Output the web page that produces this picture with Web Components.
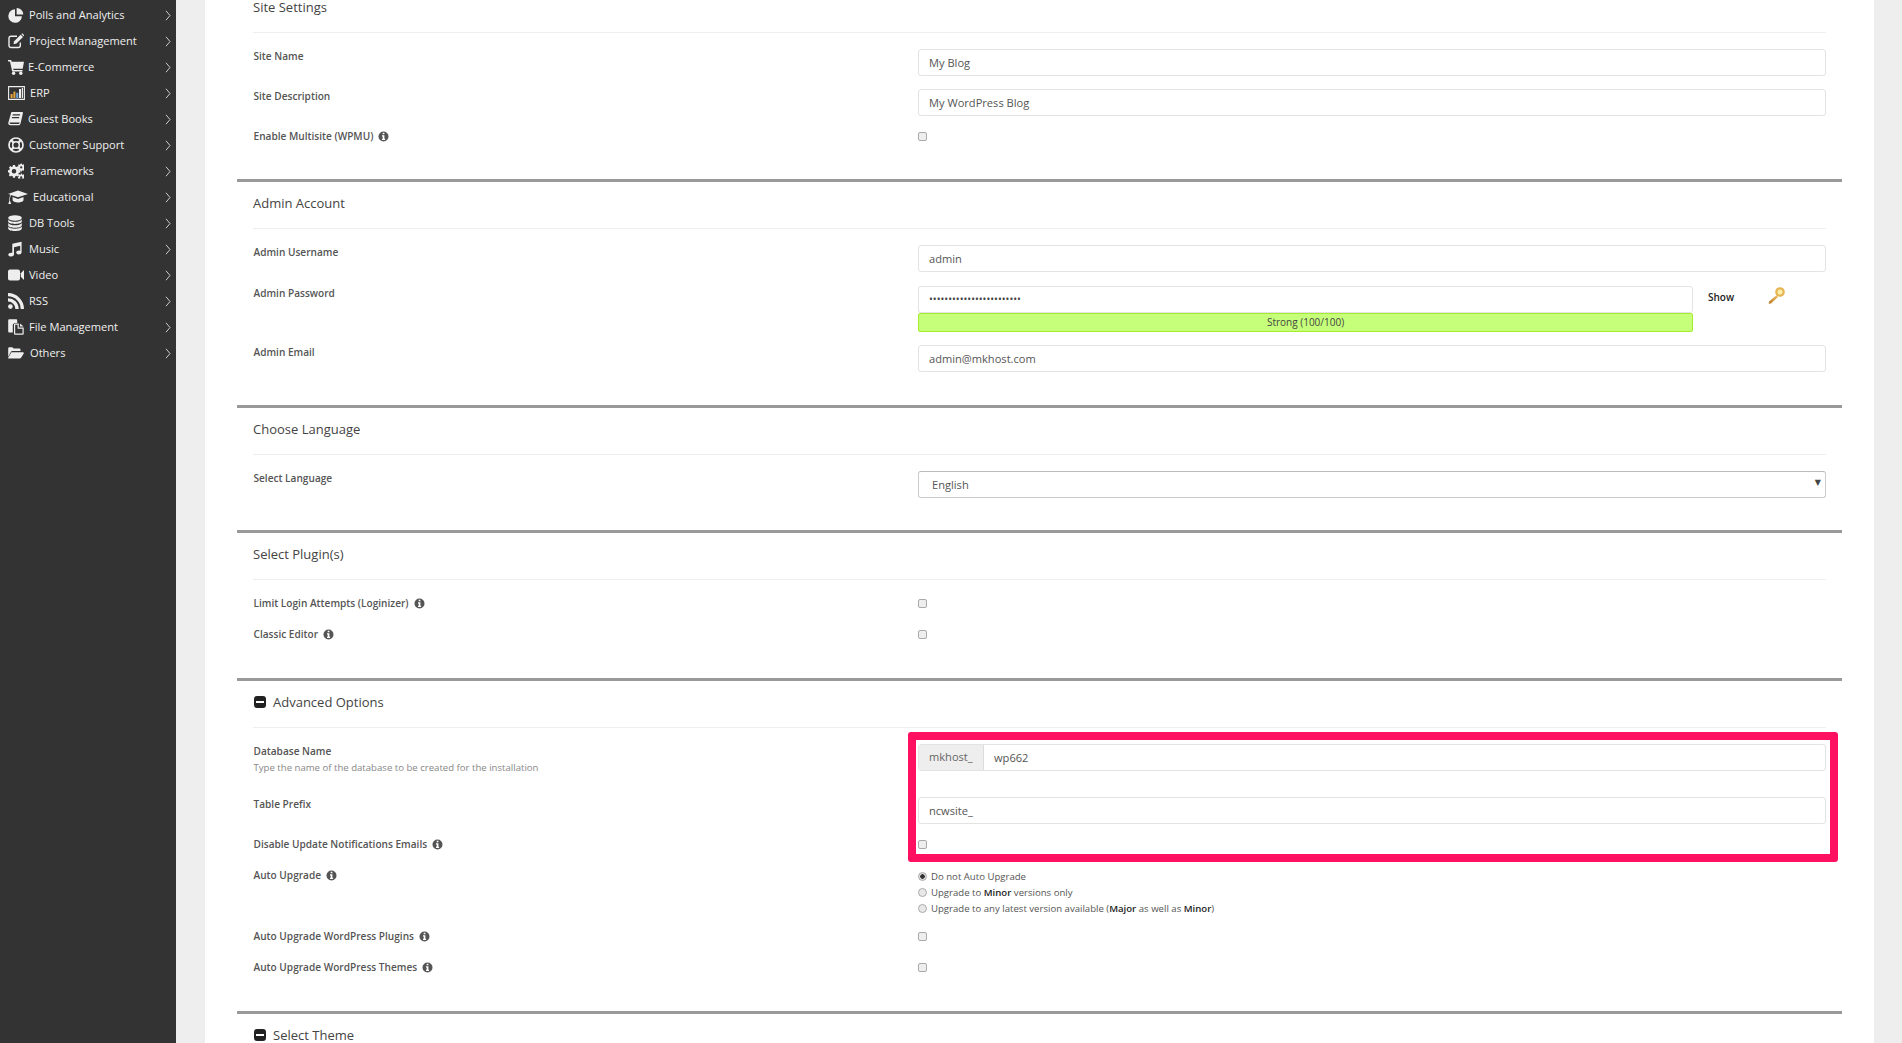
<!DOCTYPE html>
<html><head><meta charset="utf-8"><title>Install</title>
<style>
html,body{margin:0;padding:0;height:100%;overflow:hidden;background:#eee;font-family:"Open Sans","Noto Sans",sans-serif}
</style></head><body>
<rc-app>
  <rc-sidebar slot="side">
    <rc-nav icon="pie" at="29">Polls and Analytics</rc-nav>
    <rc-nav icon="edit" at="29">Project Management</rc-nav>
    <rc-nav icon="cart" at="28">E-Commerce</rc-nav>
    <rc-nav icon="bars" at="30">ERP</rc-nav>
    <rc-nav icon="book" at="28">Guest Books</rc-nav>
    <rc-nav icon="life" at="29">Customer Support</rc-nav>
    <rc-nav icon="cogs" at="30">Frameworks</rc-nav>
    <rc-nav icon="grad" at="33">Educational</rc-nav>
    <rc-nav icon="db" at="29">DB Tools</rc-nav>
    <rc-nav icon="music" at="29">Music</rc-nav>
    <rc-nav icon="video" at="29">Video</rc-nav>
    <rc-nav icon="rss" at="29">RSS</rc-nav>
    <rc-nav icon="files" at="29">File Management</rc-nav>
    <rc-nav icon="folder" at="30">Others</rc-nav>
  </rc-sidebar>

  <rc-section heading="Site Settings" pad="19" style="margin-top:-14px">
    <rc-field label="Site Name"><rc-input>My Blog</rc-input></rc-field>
    <rc-field label="Site Description"><rc-input>My WordPress Blog</rc-input></rc-field>
    <rc-field label="Enable Multisite (WPMU)" info check><rc-box></rc-box></rc-field>
  </rc-section>

  <rc-section heading="Admin Account" pad="20">
    <rc-field label="Admin Username"><rc-input>admin</rc-input></rc-field>
    <rc-field label="Admin Password" style="margin-top:14px"><rc-password></rc-password></rc-field>
    <rc-field label="Admin Email"><rc-input>admin@mkhost.com</rc-input></rc-field>
  </rc-section>

  <rc-section heading="Choose Language" pad="19">
    <rc-field label="Select Language"><rc-select>English</rc-select></rc-field>
  </rc-section>

  <rc-section heading="Select Plugin(s)" pad="20">
    <rc-field label="Limit Login Attempts (Loginizer)" info check><rc-box></rc-box></rc-field>
    <rc-field label="Classic Editor" info check><rc-box></rc-box></rc-field>
  </rc-section>

  <rc-section heading="Advanced Options" pad="20" toggle>
    <rc-highlight></rc-highlight>
    <rc-field label="Database Name" desc="Type the name of the database to be created for the installation" style="min-height:40px"><rc-input addon="mkhost_">wp662</rc-input></rc-field>
    <rc-field label="Table Prefix"><rc-input>ncwsite_</rc-input></rc-field>
    <rc-field label="Disable Update Notifications Emails" info check><rc-box></rc-box></rc-field>
    <rc-field label="Auto Upgrade" info check style="height:45px">
      <rc-radio checked>Do not Auto Upgrade</rc-radio>
      <rc-radio>Upgrade to <b>Minor</b> versions only</rc-radio>
      <rc-radio>Upgrade to any latest version available (<b>Major</b> as well as <b>Minor</b>)</rc-radio>
    </rc-field>
    <rc-field label="Auto Upgrade WordPress Plugins" info check><rc-box></rc-box></rc-field>
    <rc-field label="Auto Upgrade WordPress Themes" info check><rc-box></rc-box></rc-field>
  </rc-section>

  <rc-section heading="Select Theme" pad="20" toggle></rc-section>
</rc-app>

<script>
const ICONS={
pie:{w:16,s:`<path d="M7 2.2a6.8 6.8 0 1 0 6.9 7H7z"/><path d="M8.6 .9v6.6h6.7A6.8 6.8 0 0 0 8.6 .9z"/>`},
edit:{w:16,s:`<path fill="none" stroke="#eee" stroke-width="1.4" d="M12.3 9.5v3a2 2 0 0 1-2 2H3a2 2 0 0 1-2-2V5.2a2 2 0 0 1 2-2h6"/><path d="M5.5 11.2l.6-3 6.5-6.5 2.4 2.4-6.5 6.5z"/><path d="M13.3 1l1-.8 2 2-.8 1z"/>`},
cart:{w:16,s:`<path d="M0 1h3.200l.5 1.800H16l-1.300 6.900H5.200l.3 1.400h9v1.400H4.200L2 2.600H0z"/><circle cx="5.600" cy="14.200" r="1.700"/><circle cx="12.800" cy="14.200" r="1.700"/>`},
bars:{w:17,s:`<path fill="none" stroke="#eee" stroke-width="1.1" d="M.6 1.600h15.800v12.800H.6z"/><path fill="#e8a33c" d="M2.600 9h2v4h-2z"/><path fill="#e8a33c" d="M5.400 6.600h2V13h-2z"/><path fill="#6fa8dc" d="M8.200 7.800h2V13h-2z"/><path fill="#eee" d="M11 4h2v9h-2zM13.800 3h1.200v10h-1.200z"/>`},
book:{w:15,s:`<path d="M3.400 1h10.800c.7 0 .9.6.7 1.200L12.500 12.700c-.3.9-.9 1.500-2 1.500H2.300C1 14.200 0 13.200.3 11.800zM4.800 3.200l-.3 1.200h7.300l.3-1.200zM4 6l-.3 1.200H11l.3-1.200z"/><path fill="#333" d="M1.600 11.800c-.1.600.3 1.100 1 1.100h8c.5 0 .8-.3 1-.9l.1-.4H2.500c-.4 0-.8 0-.9.200z"/>`},
life:{w:16,s:`<circle cx="8" cy="8" r="7" fill="none" stroke="#eee" stroke-width="1.700"/><circle cx="8" cy="8" r="3.300" fill="none" stroke="#eee" stroke-width="1.500"/><path fill="none" stroke="#eee" stroke-width="2.400" d="M3 3l2.500 2.500M13 3l-2.500 2.500M3 13l2.500-2.500M13 13l-2.500-2.500"/>`},
cogs:{w:16,s:`<path fill-rule="evenodd" d="M5 3.300h2l.3 1.400 1.300.5 1.200-.8 1.400 1.400-.8 1.200.5 1.300 1.400.3v2l-1.400.3-.5 1.300.8 1.200-1.400 1.400-1.200-.8-1.300.5L7 15.900H5l-.3-1.400-1.300-.5-1.200.8L.8 13.400l.8-1.200-.5-1.300L0 10.500v-2l1.300-.3.5-1.300-.8-1.200L2.400 4.300l1.200.8 1.100-.5zM6 7.200a2.300 2.300 0 1 0 0 4.600 2.300 2.300 0 0 0 0-4.600z" transform="translate(0 -1.200)"/><path fill-rule="evenodd" d="M12.700.5h1.100l.2.900.9.400.8-.5.8.8-.5.8.4.900.9.200v1.100l-.9.200-.4.900.5.800-.8.800-.8-.5-.9.400-.2.900h-1.100l-.2-.9-.9-.4-.8.500-.8-.8.500-.8-.4-.9-.6-.2V3.900l.6-.2.4-.9-.5-.8.8-.8.8.5.900-.4zM13.200 3.300a1.100 1.100 0 1 0 0 2.200 1.100 1.100 0 0 0 0-2.200z"/><path fill-rule="evenodd" d="M12.700 10.500h1.100l.2.900.9.400.8-.5.8.8-.5.8.4.900.9.200v1.100l-.9.200-.4.300H10.300l-.3-.300v-1.300l.6-.2.4-.9-.5-.8.8-.8.8.5.900-.4zM13.200 13.300a1.100 1.100 0 1 0 0 2.200 1.100 1.100 0 0 0 0-2.200z"/>`},
grad:{w:20,s:`<path d="M10 2.200l10 3.300-10 3.400L2.900 6.500 2 9.800v2.500l1.200 3.200H.3l1.100-3.200V9.800l.8-3.600L0 5.500z" transform="translate(0 -.6)"/><path d="M4.600 8.100l5.400 1.900 5.500-1.900v3c0 1.500-2.700 2.500-5.500 2.500s-5.400-1-5.400-2.500z"/>`},
db:{w:14,s:`<ellipse cx="7" cy="3" rx="6.800" ry="2.700"/><path d="M.2 4.400C1 6 4 6.700 7 6.700s6-.7 6.800-2.300v2.200C13.800 8.300 10.500 9 7 9S.2 8.300.2 6.600zM.2 8C1 9.600 4 10.300 7 10.300s6-.7 6.800-2.300v2.200c0 1.700-3.300 2.500-6.800 2.500S.2 11.900.2 10.200zM.2 11.500C1 13 4 13.700 7 13.700s6-.7 6.800-2.200v1.900c0 1.700-3.300 2.500-6.800 2.500S.2 15.100.2 13.400z"/>`},
music:{w:14,s:`<path d="M13.600.8v10.400c0 1.300-1.300 2.300-2.800 2.300s-2.600-.8-2.600-1.900 1.300-2 2.800-2c.4 0 .8 0 1.200.2V4.700L6 6.200v7.100c0 1.300-1.300 2.300-2.900 2.300S.3 14.800.3 13.700s1.300-2 2.800-2c.4 0 .9 0 1.200.2V2.700z"/>`},
video:{w:16,s:`<path d="M2 2.500h8a2 2 0 0 1 2 2v7a2 2 0 0 1-2 2H2a2 2 0 0 1-2-2v-7a2 2 0 0 1 2-2z"/><path d="M12.800 6.300L16 3v10l-3.200-3.300z"/>`},
rss:{w:16,s:`<circle cx="2.400" cy="13.600" r="2.300"/><path d="M0 5.300v3.300a7.300 7.300 0 0 1 7.400 7.300h3.300A10.600 10.600 0 0 0 0 5.300z"/><path d="M0 0v3.200a12.700 12.700 0 0 1 12.700 12.700H16A16 16 0 0 0 0 0z"/>`},
files:{w:16,s:`<path d="M1.200.3h7a1 1 0 0 1 1 1v2.600H6.500L4.800 5.600v8H1.200a1 1 0 0 1-1-1V1.300a1 1 0 0 1 1-1z"/><path fill-rule="evenodd" d="M7 4.500h3.800v4h4.900v6.300a1 1 0 0 1-1 1H7a1 1 0 0 1-1-1v-9.300a1 1 0 0 1 1-1zM7.200 5.800v8.800h7.300V9.700h-4.900V5.800z"/><path d="M12 4.600l3.600 2.900H12z"/>`},
folder:{w:16,s:`<path d="M.2 11.700V3.400a1.200 1.200 0 0 1 1.200-1.200h3l1.200 1.300h5.700a1.200 1.200 0 0 1 1.200 1.200v1.400H4.700c-.9 0-1.600.5-2 1.200z"/><path d="M3.500 7.200H15c.7 0 1.100.6.700 1.200l-2.600 4.400c-.3.500-.8.800-1.300.8H1c-.7 0-1.100-.6-.7-1.200z"/>`}
};
function def(name,css,html){
  customElements.define(name,class extends HTMLElement{
    constructor(){super();const r=this.attachShadow({mode:"open"});r.innerHTML=`<style>${css}</style>`+html;}
  });
}
def("rc-app",`
:host{display:flex;width:1902px;height:1043px;overflow:hidden;background:#eee}
.side{flex:0 0 176px;background:#333}
.main{flex:1;padding:0 28px 0 29px;min-width:0}
.panel{background:#fff;padding:0 32px;height:100%;overflow:hidden}
`,`<div class="side"><slot name="side"></slot></div><div class="main"><div class="panel"><slot></slot></div></div>`);

def("rc-sidebar",`:host{display:block;padding-top:2px}`,`<slot></slot>`);

customElements.define("rc-nav",class extends HTMLElement{
  connectedCallback(){
    const ic=ICONS[this.getAttribute("icon")],at=+this.getAttribute("at");
    const r=this.attachShadow({mode:"open"});
    r.innerHTML=`<style>
    :host{display:flex;align-items:center;height:26px;padding-left:8px;padding-right:5px;font:500 11.100px/26px "Open Sans",sans-serif;color:#f0f0f0}
    .i{flex:none;width:${at-8}px;display:flex;align-items:center}
    svg.g{fill:#eee;display:block}
    .t{flex:1}
    .c{flex:none;display:block}
    </style><span class="i"><svg class="g" width="${ic.w}" height="16" viewBox="0 0 ${ic.w} 16">${ic.s}</svg></span><span class="t"><slot></slot></span>
    <svg class="c" width="6" height="11" viewBox="0 0 6 11"><path d="M1 .8L5 5.500 1 10.200" fill="none" stroke="#ccc" stroke-width="1"/></svg>`;
  }
});

customElements.define("rc-section",class extends HTMLElement{
  connectedCallback(){
    const r=this.attachShadow({mode:"open"});
    const t=this.hasAttribute("toggle");
    r.innerHTML=`<style>
    :host{display:block;position:relative;border-bottom:3px solid #999;padding:0 16px ${this.getAttribute("pad")}px}
    :host(:last-child){border-bottom:0}
    .h{display:flex;align-items:center;height:46px;box-sizing:border-box;padding:0 0 5px;font:500 13px/20px "Open Sans",sans-serif;color:#444;gap:7px}
    hr{border:0;height:1px;background:#eee;margin:0 0 16px}
    .m{width:12px;height:12px;background:#222;border-radius:3px;display:flex;align-items:center;justify-content:center;margin-left:1px}
    .m i{display:block;width:8px;height:2px;background:#fff}
    </style><div class="h">${t?'<span class="m"><i></i></span>':''}<span>${this.getAttribute("heading")}</span></div><hr><slot></slot>`;
  }
});

customElements.define("rc-field",class extends HTMLElement{
  connectedCallback(){
    const r=this.attachShadow({mode:"open"});
    const c=this.hasAttribute("check"),d=this.getAttribute("desc");
    r.innerHTML=`<style>
    :host{display:grid;grid-template-columns:665px 1fr;margin-bottom:${c?16:13}px;min-height:${c?15:0}px;align-items:start}
    .l{font:600 10.100px/15px "Open Sans",sans-serif;color:#555;display:flex;align-items:center;gap:5px;padding-left:.5px}
    .d{font:400 9.600px/16px "Open Sans",sans-serif;color:#888;padding-left:.5px;margin-top:1px}
    svg{display:block;flex:none}
    </style><div><div class="l"><span>${this.getAttribute("label")}</span>${this.hasAttribute("info")?`<svg width="11" height="11" viewBox="0 0 11 11"><circle cx="5.500" cy="5.500" r="5" fill="#555"/><path fill="#fff" d="M4.700 1.800h1.700v1.500H4.700zM4 4.300h2.400v3.500h.7v1.200H4V7.800h.7V5.500H4z"/></svg>`:""}</div>${d?`<div class="d">${d}</div>`:""}</div><div><slot></slot></div>`;
  }
});

customElements.define("rc-input",class extends HTMLElement{
  connectedCallback(){
    const r=this.attachShadow({mode:"open"});
    const a=this.getAttribute("addon");
    r.innerHTML=`<style>
    :host{display:flex;height:27px;box-sizing:border-box;border:1px solid #e3e3e3;border-radius:3px;background:#fff;font:400 11.100px/25px "Open Sans",sans-serif;color:#555;overflow:hidden}
    .a{flex:none;width:65px;box-sizing:border-box;padding-left:10px;background:#eee;border-right:1px solid #ddd;color:#666;line-height:23px}
    .v{padding-left:10px}
    </style>${a?`<span class="a">${a}</span>`:""}<span class="v"><slot></slot></span>`;
  }
});

def("rc-password",`
:host{display:flex;align-items:flex-start}
.c{flex:0 0 775px}
.in{height:27px;box-sizing:border-box;border:1px solid #e3e3e3;border-radius:3px;padding-left:10px;font:400 10.200px/25px "Open Sans",sans-serif;color:#444}
.bar{height:19px;box-sizing:border-box;background:#c6ff79;border:1px solid #a5ee2e;border-radius:2px;text-align:center;font:400 10px/17px "Open Sans",sans-serif;color:#444}
.s{margin:4px 0 0 15px;width:59px;font:600 10px/15px "Open Sans",sans-serif;color:#222}
svg{display:block}
`,`<div class="c"><div class="in">••••••••••••••••••••••••</div><div class="bar">Strong (100/100)</div></div><span class="s">Show</span>
<svg width="19" height="19" viewBox="0 0 19 19"><defs><linearGradient id="k" x1="0" y1="1" x2="1" y2="0"><stop offset="0" stop-color="#b87a25"/><stop offset="1" stop-color="#f0c060"/></linearGradient></defs><path d="M9.500 9.300L2 15.500l-.3 2.300 2.300-.3L11 11z" fill="url(#k)"/><circle cx="13" cy="6" r="4.800" fill="#e7b556"/><circle cx="13" cy="6" r="2.500" fill="#fbf0a8"/></svg>`);

def("rc-select",`
:host{display:flex;align-items:center;justify-content:space-between;height:27px;box-sizing:border-box;border:1px solid #ccc;border-top-color:#bbb;border-radius:3px;padding:0 4px 0 13px;font:400 11.100px/25px "Open Sans",sans-serif;color:#555}
i{font:normal 8px/1 "DejaVu Sans",sans-serif;color:#444;margin-top:-3px}
`,`<span><slot></slot></span><i>▼</i>`);

def("rc-box",`:host{display:block;width:9px;height:9px;box-sizing:border-box;margin-top:3px;background:#eee;border:1px solid #aaa;border-radius:2px}`,``);

customElements.define("rc-radio",class extends HTMLElement{
  connectedCallback(){
    const r=this.attachShadow({mode:"open"});
    r.innerHTML=`<style>
    :host{display:flex;align-items:center;height:16px;font:400 9.600px/16px "Open Sans",sans-serif;color:#555}
    :host(:first-child){margin-top:1px}
    ::slotted(b){color:#222;font-weight:600}
    i{display:block;flex:none;width:9px;height:9px;box-sizing:border-box;margin:-2px 4px 0 0;border:1px solid #aaa;border-radius:50%;background:${this.hasAttribute("checked")?"radial-gradient(circle,#333 0 2px,#ddd 2.500px)":"#e8e8e8"}}
    </style><i></i><span><slot></slot></span>`;
  }
});

def("rc-highlight",`
:host{position:absolute;left:671px;top:51px;width:930px;height:130px;box-sizing:border-box;border:8px solid #ff1060;border-radius:3px;pointer-events:none}
`,``);
</script>
</body></html>
